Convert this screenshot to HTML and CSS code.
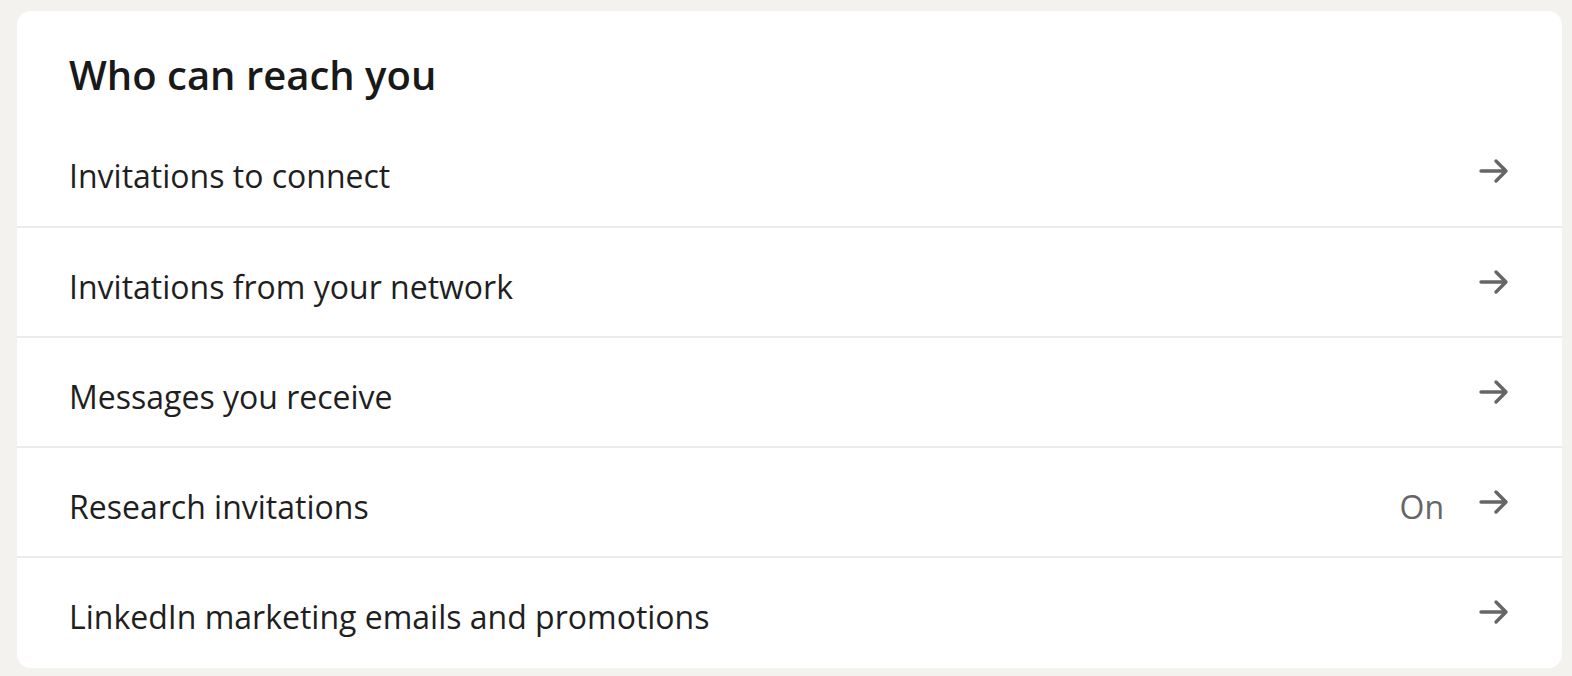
FILE: index.html
```html
<!DOCTYPE html>
<html lang="en">
<head>
<meta charset="utf-8">
<title>Who can reach you</title>
<link rel="stylesheet" href="styles.css">
</head>
<body>
<main class="page">
  <section class="card">
    <h2 class="card-title">Who can reach you</h2>
    <ul class="settings">
      <li class="row"><span class="label">Invitations to connect</span><span class="meta"><svg class="arrow" viewBox="0 0 32 28"><path d="M3 14H28M18 4L28 14L18 24"/></svg></span></li>
      <li class="row"><span class="label">Invitations from your network</span><span class="meta"><svg class="arrow" viewBox="0 0 32 28"><path d="M3 14H28M18 4L28 14L18 24"/></svg></span></li>
      <li class="row"><span class="label">Messages you receive</span><span class="meta"><svg class="arrow" viewBox="0 0 32 28"><path d="M3 14H28M18 4L28 14L18 24"/></svg></span></li>
      <li class="row"><span class="label">Research invitations</span><span class="meta"><span class="status">On</span><svg class="arrow" viewBox="0 0 32 28"><path d="M3 14H28M18 4L28 14L18 24"/></svg></span></li>
      <li class="row"><span class="label">LinkedIn marketing emails and promotions</span><span class="meta"><svg class="arrow" viewBox="0 0 32 28"><path d="M3 14H28M18 4L28 14L18 24"/></svg></span></li>
    </ul>
  </section>
</main>
</body>
</html>
```
FILE: styles.css
```css
html, body {
  margin: 0;
  padding: 0;
  background: #f3f2ef;
}
body {
  font-family: "Open Sans", "Noto Sans", sans-serif;
  color: #191919;
}
.page {
  padding: 11px 10px 8px 17px;
}
.card {
  background: #ffffff;
  border-radius: 14px;
  height: 657px;
  overflow: hidden;
  display: flex;
  flex-direction: column;
}
.card-title {
  margin: 0;
  height: 105px;
  box-sizing: border-box;
  padding: 38px 0 0 52px;
  font-size: 40px;
  font-weight: 600;
  line-height: 52px;
  color: #191919;
}
.settings {
  list-style: none;
  margin: 0;
  padding: 0;
}
.row {
  height: 110px;
  box-sizing: border-box;
  display: flex;
  align-items: center;
  justify-content: space-between;
  padding: 0 52px 0 52px;
  border-top: 2px solid #ebebeb;
}
.row:first-child {
  border-top: none;
}
.label {
  font-size: 32px;
  line-height: 44px;
  padding-top: 9px;
  color: #1f1f1f;
}
.meta {
  display: flex;
  align-items: center;
  gap: 34px;
}
.status {
  font-size: 32px;
  line-height: 44px;
  padding-top: 9px;
  color: #666666;
}
.arrow {
  width: 32px;
  height: 28px;
  fill: none;
  stroke: #666666;
  stroke-width: 3.4;
  stroke-linecap: round;
  stroke-linejoin: round;
}
```
